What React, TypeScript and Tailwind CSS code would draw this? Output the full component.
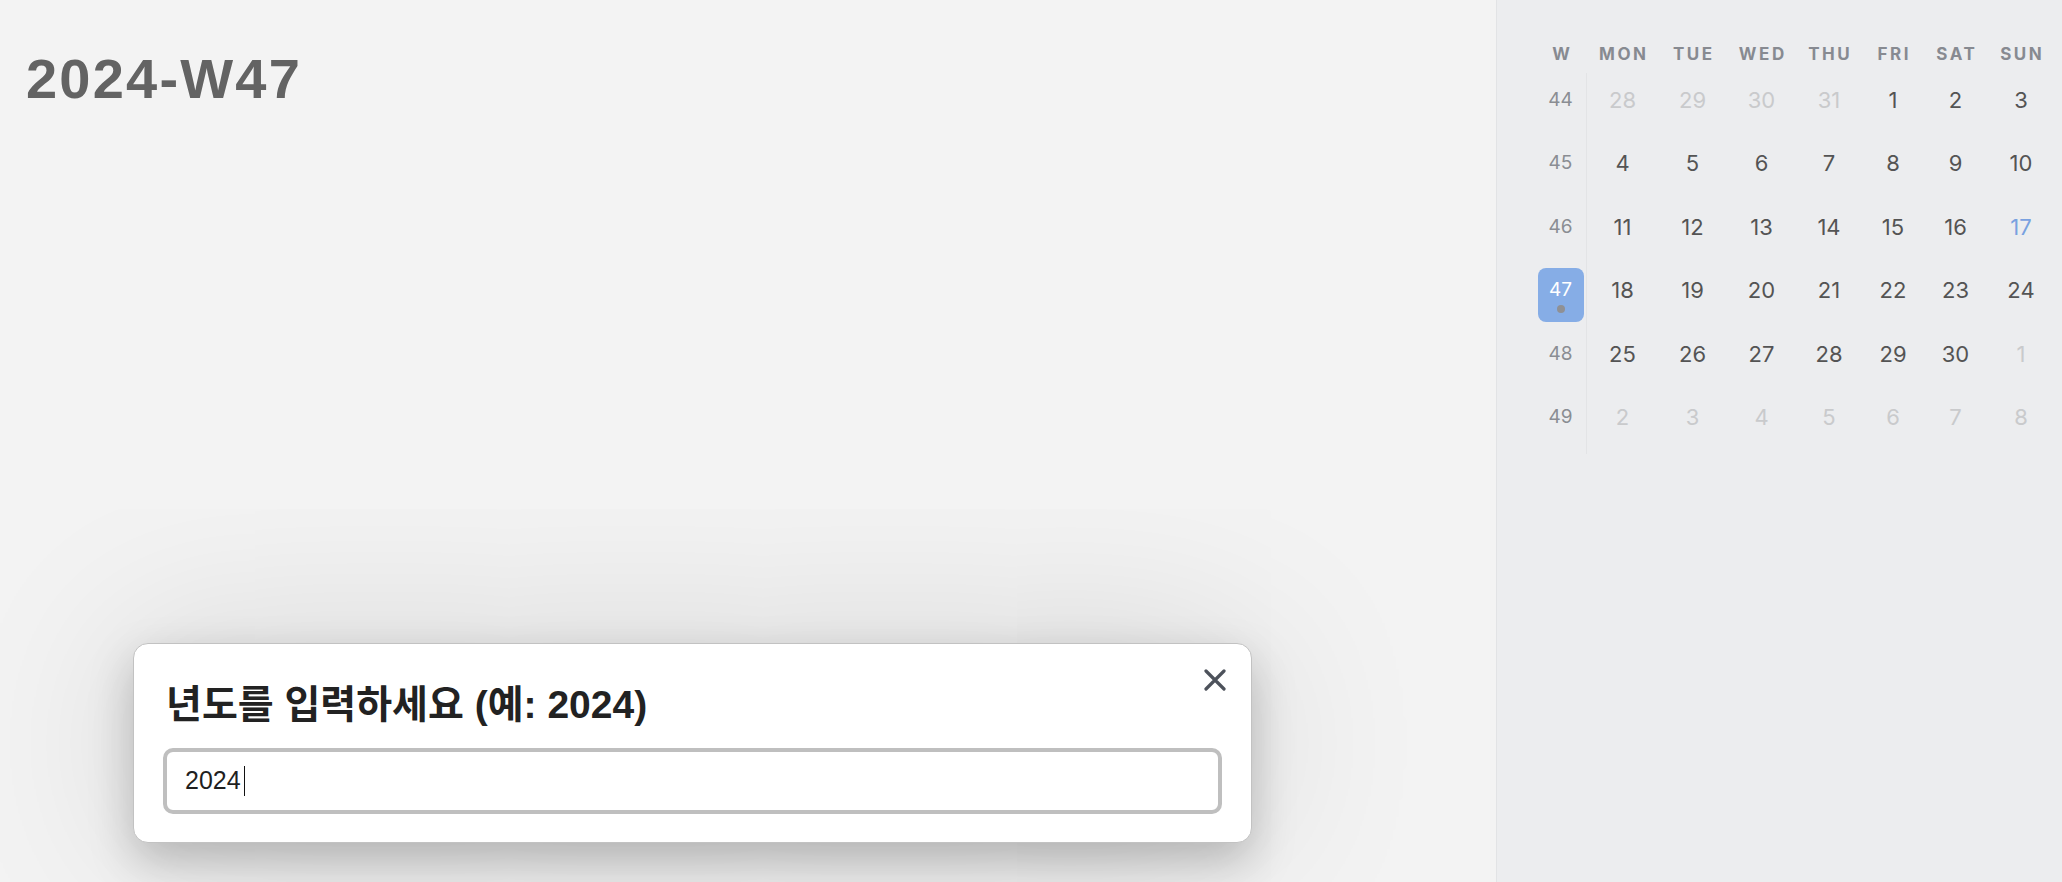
import React from 'react';

type Day = { n: number; tone?: 'muted' | 'today' };

const weeks: { week: number; current?: boolean; days: Day[] }[] = [
    { week: 44, days: [{ n: 28, tone: 'muted' }, { n: 29, tone: 'muted' }, { n: 30, tone: 'muted' }, { n: 31, tone: 'muted' }, { n: 1 }, { n: 2 }, { n: 3 }] },
    { week: 45, days: [{ n: 4 }, { n: 5 }, { n: 6 }, { n: 7 }, { n: 8 }, { n: 9 }, { n: 10 }] },
    { week: 46, days: [{ n: 11 }, { n: 12 }, { n: 13 }, { n: 14 }, { n: 15 }, { n: 16 }, { n: 17, tone: 'today' }] },
    { week: 47, current: true, days: [{ n: 18 }, { n: 19 }, { n: 20 }, { n: 21 }, { n: 22 }, { n: 23 }, { n: 24 }] },
    { week: 48, days: [{ n: 25 }, { n: 26 }, { n: 27 }, { n: 28 }, { n: 29 }, { n: 30 }, { n: 1, tone: 'muted' }] },
    { week: 49, days: [2, 3, 4, 5, 6, 7, 8].map((n) => ({ n, tone: 'muted' as const })) },
];

const headers = ['W', 'MON', 'TUE', 'WED', 'THU', 'FRI', 'SAT', 'SUN'];

const toneClass = (tone?: Day['tone']) => {
    if (tone === 'muted') return 'text-[#c9cacc]';
    if (tone === 'today') return 'text-[#79a1e0]';
    return 'text-[#545454]';
};

const Cell: React.FC<{ label: number; className: string; dot?: boolean }> = ({ label, className, dot }) => (
    <div className="flex flex-col items-center justify-center">
        <span className={`leading-[26px] ${className}`}>{label}</span>
        <span className={`mt-[2px] size-[8px] rounded-full ${dot ? 'bg-[#8f9094]' : 'bg-transparent'}`} />
    </div>
);

const Calendar: React.FC = () => (
    <aside className="w-[566px] shrink-0 border-l border-[#e2e3e5] bg-[#ecedef] pl-[38px] pt-[36px] font-['Inter',sans-serif]">
        <div className="grid grid-cols-[52px_71px_69px_69px_66px_62px_63px_68px]">
            {headers.map((h) => (
                <div key={h} className="flex h-[37px] items-center justify-center text-[17px] font-bold tracking-[0.15em] text-[#878a91]">
                    <span className="mr-[-0.15em]">{h}</span>
                </div>
            ))}
            {weeks.map((w) => (
                <React.Fragment key={w.week}>
                    <div className="flex h-[63.5px] items-center justify-center border-r border-[#e3e4e6]">
                        {w.current ? (
                            <div className="flex h-[54px] w-[46px] items-center justify-center rounded-lg bg-[#86ade6]">
                                <Cell label={w.week} className="text-[19px] text-white" dot />
                            </div>
                        ) : (
                            <Cell label={w.week} className="text-[19px] text-[#8a8d93]" />
                        )}
                    </div>
                    {w.days.map((d, i) => (
                        <div key={i} className="flex h-[63.5px] items-center justify-center">
                            <Cell label={d.n} className={`text-[22px] ${toneClass(d.tone)}`} />
                        </div>
                    ))}
                </React.Fragment>
            ))}
        </div>
    </aside>
);

const YearPrompt: React.FC = () => (
    <div className="absolute left-[133px] top-[643px] w-[1119px] rounded-[15px] border border-[#c2c2c2] bg-white px-[29px] pb-[28px] pt-[38px] shadow-[0_18px_45px_rgba(0,0,0,0.22),0_0_180px_rgba(0,0,0,0.13)]">
        <button className="absolute right-[25px] top-[25px] text-[#4d525b]">
            <svg width="22" height="22" viewBox="0 0 22 22" fill="none" stroke="currentColor" strokeWidth="3.2" strokeLinecap="round">
                <path d="M2 2L20 20M20 2L2 20" />
            </svg>
        </button>
        <h2 className="ml-[3px] text-[39px] font-bold leading-[46px] text-[#222] font-['Liberation_Sans','Noto_Sans_CJK_KR',sans-serif]">
            년도를 입력하세요 (예: 2024)
        </h2>
        <div className="mt-[20px] flex h-[66px] items-center rounded-[10px] border-4 border-[#bfbfbf] pl-[18px] font-['Liberation_Sans',sans-serif] text-[25px] text-[#1f1f1f]">
            <span>2024</span>
            <span className="ml-[3px] h-[30px] w-px bg-[#111]" />
        </div>
    </div>
);

export default function App() {
    return (
        <div className="flex h-[882px] w-[2062px] overflow-hidden bg-[#f3f3f3]">
            <main className="relative flex-1">
                <h1 className="pl-[26px] pt-[51px] font-['Liberation_Sans',sans-serif] text-[56px] font-bold leading-none tracking-[2.2px] text-[#636363]">
                    2024-W47
                </h1>
                <YearPrompt />
            </main>
            <Calendar />
        </div>
    );
}
